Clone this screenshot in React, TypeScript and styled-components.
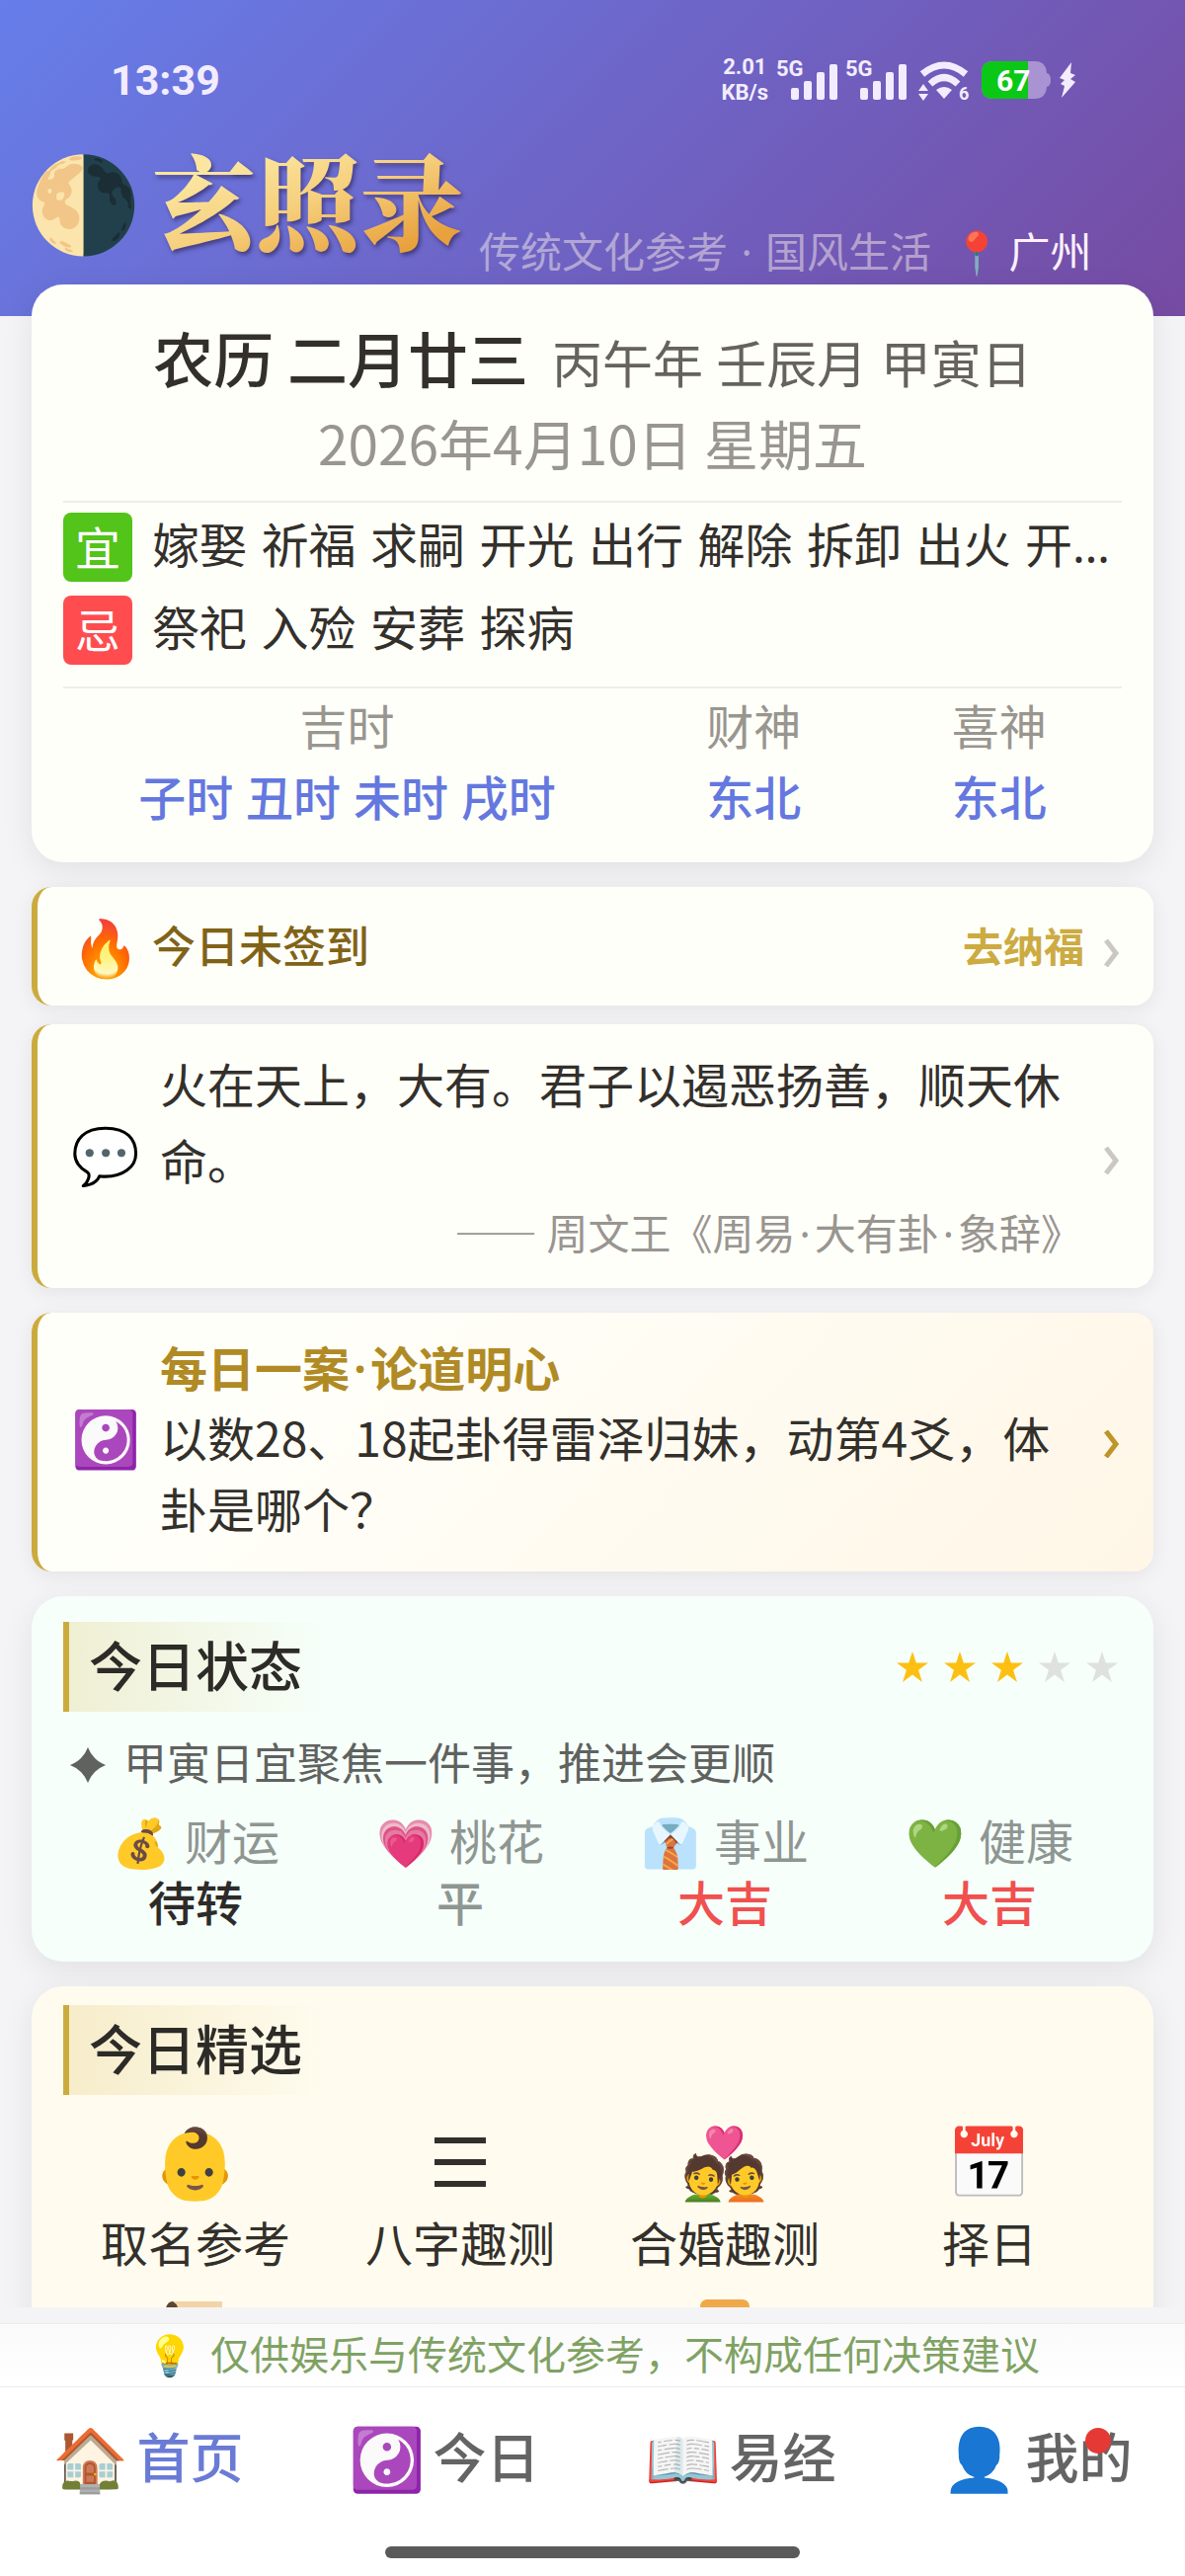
import React from 'react';
import styled, { createGlobalStyle } from 'styled-components';

const GlobalStyle = createGlobalStyle`
  * {
    box-sizing: border-box;
  }

  body {
    margin: 0;
    background: #f4f4f6;
    color: #33302b;
    font-family: 'Noto Sans CJK SC', 'Noto Color Emoji', sans-serif;
  }

  h1, h2, p, ul, dl, dt, dd {
    margin: 0;
    padding: 0;
    font-weight: 400;
  }

  ul {
    list-style: none;
  }

  button {
    border: 0;
    padding: 0;
    background: none;
    color: inherit;
    font: inherit;
    text-align: left;
    cursor: pointer;
  }

  a {
    color: inherit;
    text-decoration: none;
  }
`;

const Page = styled.div`
  display: flex;
  flex-direction: column;
  height: 100vh;
`;

const Main = styled.main`
  flex: 1;
  min-height: 0;
  overflow: hidden;
  margin-bottom: 16px;
`;

/* header */

const Header = styled.header`
  height: 320px;
  padding: 50px 26px 0;
  background: linear-gradient(135deg, #667eea 0%, #764ba2 100%);
`;

const StatusBar = styled.div`
  display: flex;
  align-items: center;
  justify-content: space-between;
  height: 62px;
  padding: 0 84px 0 86px;
  color: #f3ecff;
  font-family: Roboto, sans-serif;
`;

const Clock = styled.time`
  font-size: 43px;
  font-weight: 700;
`;

const StatusIcons = styled.div`
  display: flex;
  align-items: center;
  gap: 8px;
`;

const NetSpeed = styled.div`
  font-size: 22px;
  line-height: 26px;
  font-weight: 700;
  text-align: center;
`;

const BrandRow = styled.div`
  display: flex;
  align-items: flex-start;
  height: 158px;
`;

const Moon = styled.span`
  flex: none;
  width: 128px;
  font-size: 94px;
  line-height: 110px;
  padding-top: 32px;
`;

const BrandName = styled.h1`
  flex: none;
  padding-top: 18px;
  margin-right: 16px;
  font-family: 'Noto Serif CJK SC', 'Noto Sans CJK SC', serif;
  font-size: 105px;
  line-height: 140px;
  font-weight: 900;
  background: linear-gradient(160deg, #fbe6a0 30%, #f6cf7c 55%, #e8a13c 85%);
  background-clip: text;
  -webkit-background-clip: text;
  color: transparent;
  filter: drop-shadow(2px 3px 2px rgba(40, 30, 80, 0.6));
`;

const Tagline = styled.p`
  padding-top: 113px;
  color: rgba(255, 245, 235, 0.48);
  font-size: 42px;
  line-height: 56px;
  white-space: nowrap;
`;

const City = styled.button`
  display: flex;
  gap: 6px;
  padding-top: 113px;
  margin-left: 20px;
  color: #fdf0fb;
  font-size: 42px;
  line-height: 56px;
  white-space: nowrap;
`;

/* cards */

const Cards = styled.div`
  position: relative;
  display: flex;
  flex-direction: column;
  gap: 25px;
  margin-top: -32px;
  padding: 0 32px;
`;

const CardGroup = styled.div`
  display: flex;
  flex-direction: column;
  gap: 19px;
`;

const Card = styled.section<{ $bg?: string; $pad: string }>`
  padding: ${(p) => p.$pad};
  border-radius: 32px;
  background: ${(p) => p.$bg || '#fffffa'};
  box-shadow: 0 8px 32px rgba(0, 0, 0, 0.08);
`;

const LunarDate = styled.h2`
  display: flex;
  align-items: baseline;
  justify-content: center;
  gap: 24px;
  height: 88px;
  font-size: 61px;
  line-height: 88px;
  font-weight: 500;
`;

const GanZhi = styled.span`
  color: #66625c;
  font-size: 51px;
  font-weight: 400;
`;

const SolarDate = styled.p`
  margin-bottom: 19px;
  color: #999590;
  font-size: 55px;
  line-height: 82px;
  text-align: center;
`;

const Section = styled.div<{ $pad: string }>`
  border-top: 2px solid #efece9;
  padding: ${(p) => p.$pad};
`;

const AdviceRow = styled.div`
  display: flex;
  align-items: center;
  gap: 20px;
  height: 70px;

  & + & {
    margin-top: 14px;
  }
`;

const AdviceBadge = styled.span<{ $color: string }>`
  flex: none;
  width: 70px;
  height: 70px;
  border-radius: 8px;
  background: ${(p) => p.$color};
  color: #fff;
  font-size: 46px;
  line-height: 66px;
  text-align: center;
`;

/* Noto Sans comes first so that the ellipsis sits on the baseline */
const AdviceText = styled.p`
  flex: 1;
  min-width: 0;
  overflow: hidden;
  padding-bottom: 4px;
  white-space: nowrap;
  text-overflow: ellipsis;
  font-family: 'Noto Sans', 'Noto Sans CJK SC', sans-serif;
  font-size: 48px;
  line-height: 70px;
`;

const Word = styled.span`
  margin-right: 2px;

  &:last-child {
    margin-right: 0;
  }
`;

const Gods = styled.dl`
  display: flex;
  justify-content: space-around;
  text-align: center;
  font-size: 48px;
  line-height: 72px;

  dt {
    color: #99958f;
  }

  dd {
    color: #6478e0;
    font-weight: 500;
  }
`;

const LinkCard = styled.button<{ $bg?: string; $pad: string }>`
  display: flex;
  align-items: center;
  width: 100%;
  padding: ${(p) => p.$pad};
  border-left: 6px solid #cbab3e;
  border-radius: 20px;
  background: ${(p) => p.$bg || '#fffffa'};
  box-shadow: 0 4px 20px rgba(0, 0, 0, 0.07);
`;

const CardEmoji = styled.span<{ $width?: number }>`
  flex: none;
  width: ${(p) => p.$width || 90}px;
  padding-bottom: 4px;
  font-size: 56px;
  line-height: 68px;
`;

const CardBody = styled.span`
  flex: 1;
  min-width: 0;
  margin-right: 20px;
`;

const CheckinText = styled.span`
  flex: 1;
  padding-bottom: 4px;
  color: #806318;
  font-size: 44px;
  line-height: 68px;
  font-weight: 500;
`;

const CheckinAction = styled.span`
  padding-bottom: 4px;
  margin-right: 18px;
  color: #ccab42;
  font-size: 41px;
  line-height: 68px;
  font-weight: 600;
`;

const QuoteText = styled.span`
  display: block;
  font-size: 48px;
  line-height: 77px;
`;

const QuoteSource = styled.cite`
  display: block;
  height: 62px;
  margin-top: 4px;
  color: #999590;
  font-size: 42px;
  line-height: 62px;
  font-style: normal;
  text-align: right;
  white-space: nowrap;
`;

const CaseTitle = styled.span`
  display: block;
  height: 70px;
  color: #b08a24;
  font-size: 48px;
  line-height: 70px;
  font-weight: 600;
`;

const CaseText = styled.span`
  display: block;
  font-size: 48px;
  line-height: 72px;
`;

const MidDot = styled.span`
  padding: 0 4px;
  font-family: 'Noto Sans', sans-serif;
`;

const ChevronIcon = styled.svg`
  flex: none;
  margin-top: 14px;
`;

const SectionHead = styled.div`
  display: flex;
  align-items: center;
  justify-content: space-between;
`;

const SectionTitle = styled.h2`
  padding: 0 28px 5px 20px;
  border-left: 6px solid #cbab3e;
  background: linear-gradient(90deg, rgba(212, 175, 55, 0.2), rgba(212, 175, 55, 0));
  color: #2d2b27;
  font-size: 54px;
  line-height: 86px;
  font-weight: 500;
`;

const Stars = styled.div`
  display: flex;
  gap: 16px;
  padding-right: 4px;
`;

const Hint = styled.p`
  display: flex;
  align-items: center;
  gap: 18px;
  margin-top: 18px;
  padding-left: 7px;
  color: #5f625f;
  font-size: 44px;
  line-height: 64px;

  svg {
    margin-top: 8px;
  }
`;

const FortuneGrid = styled.dl`
  display: grid;
  grid-template-columns: repeat(4, 1fr);
  margin-top: 16px;
  font-size: 48px;
  line-height: 62px;
  text-align: center;
`;

const FortuneLabel = styled.dt`
  display: flex;
  justify-content: center;
  gap: 14px;
  color: #8f9692;
`;

const FortuneValue = styled.dd<{ $color: string }>`
  color: ${(p) => p.$color};
  font-weight: 500;
`;

const PickGrid = styled.ul`
  display: grid;
  grid-template-columns: repeat(4, 1fr);
  row-gap: 20px;
  margin-top: 22px;
`;

const Pick = styled.a`
  display: flex;
  flex-direction: column;
  align-items: center;
  gap: 10px;
  font-size: 48px;
  line-height: 64px;
`;

const PickEmoji = styled.span`
  display: flex;
  align-items: center;
  justify-content: center;
  height: 84px;
  font-size: 70px;
  line-height: 84px;
`;

/* footer */

const Tip = styled.p`
  display: flex;
  align-items: center;
  justify-content: center;
  gap: 16px;
  height: 65px;
  padding-bottom: 5px;
  border-top: 1px solid #ececec;
  border-bottom: 1px solid #ececec;
  background: linear-gradient(#fafafa, #fff);
  color: #7fa263;
  font-size: 40px;
`;

const BottomArea = styled.div`
  padding-bottom: 18px;
  background: #fff;
`;

const Nav = styled.nav`
  display: flex;
  height: 144px;
  padding-bottom: 8px;
`;

const NavItem = styled.a<{ $active?: boolean }>`
  flex: 1;
  display: flex;
  align-items: center;
  justify-content: center;
  gap: 8px;
  color: ${(p) => (p.$active ? '#6a7bd6' : '#646464')};
  font-size: 54px;
  font-weight: 500;
`;

const NavEmoji = styled.span`
  font-size: 62px;
`;

const NavLabel = styled.span`
  position: relative;
`;

const RedDot = styled.i`
  position: absolute;
  top: 12px;
  right: 22px;
  width: 26px;
  height: 26px;
  border-radius: 50%;
  background: #e53935;
`;

const HomeBar = styled.div`
  width: 35%;
  height: 12px;
  margin: 17px auto 0;
  border-radius: 6px;
  background: #5a5a5a;
`;

const good = ['嫁娶', '祈福', '求嗣', '开光', '出行', '解除', '拆卸', '出火', '开市', '交易'];
const bad = ['祭祀', '入殓', '安葬', '探病'];
const hours = ['子时', '丑时', '未时', '戌时'];

const fortunes = [
  { icon: '💰', label: '财运', value: '待转', color: '#2d2b29' },
  { icon: '💗', label: '桃花', value: '平', color: '#8f9692' },
  { icon: '👔', label: '事业', value: '大吉', color: '#f0504f' },
  { icon: '💚', label: '健康', value: '大吉', color: '#f0504f' },
];

const navs = [
  { icon: '🏠', label: '首页', active: true },
  { icon: '☯️', label: '今日' },
  { icon: '📖', label: '易经' },
  { icon: '👤', label: '我的', dot: true },
];

const Words: React.FC<{ list: string[] }> = ({ list }) => (
  <>
    {list.map((w, i) => (
      <React.Fragment key={w}>
        {i > 0 && ' '}
        <Word>{w}</Word>
      </React.Fragment>
    ))}
  </>
);

const Chevron: React.FC<{ color?: string }> = ({ color = '#cbc8c4' }) => (
  <ChevronIcon width="18" height="28" viewBox="0 0 18 28" fill="none" aria-hidden="true">
    <path d="M4 1 L14 14 L4 27" stroke={color} strokeWidth="5" />
  </ChevronIcon>
);

const Signal = () => (
  <svg width="62" height="52" viewBox="0 0 62 52" fill="currentColor" aria-hidden="true">
    <text x="0" y="22" fontSize="22" fontWeight="700" fontFamily="Roboto, sans-serif">5G</text>
    <rect x="15" y="34" width="8" height="12" rx="2" />
    <rect x="28" y="27" width="8" height="19" rx="2" />
    <rect x="41" y="18" width="8" height="28" rx="2" />
    <rect x="54" y="10" width="8" height="36" rx="2" />
  </svg>
);

const Wifi = () => (
  <svg width="60" height="52" viewBox="-4 -4 60 52" fill="currentColor" aria-hidden="true">
    <path d="M4 16 Q26 -2 48 16" fill="none" stroke="currentColor" strokeWidth="7" />
    <path d="M12 26 Q26 13 40 26" fill="none" stroke="currentColor" strokeWidth="7" />
    <path d="M18 32 Q26 26 34 32 L26 41 Z" />
    <path d="M0 33 L5 26 L10 33 Z M0 36 L10 36 L5 43 Z" />
    <text x="41" y="42" fontSize="18" fontWeight="700" fontFamily="Roboto, sans-serif">6</text>
  </svg>
);

const Battery = () => (
  <svg width="70" height="38" viewBox="0 0 70 38" aria-hidden="true">
    <path d="M12 0 H54 Q65 0 66 12 Q70 13 70 19 Q70 25 66 26 Q65 38 54 38 H12 Q0 38 0 26 V12 Q0 0 12 0 Z" fill="#a993d2" />
    <path d="M12 0 H47 V38 H12 Q0 38 0 26 V12 Q0 0 12 0 Z" fill="#0bc816" />
    <text x="15" y="30" fontSize="30" fontWeight="700" fill="#fff" fontFamily="Roboto, sans-serif">67</text>
  </svg>
);

const Bolt = () => (
  <svg width="18" height="36" viewBox="0 0 18 36" fill="currentColor" aria-hidden="true">
    <path d="M13 0 L1 16 L6 18 L2 22 L6 24 L3 36 L17 20 L12 17 L17 13 L12 11 Z" />
  </svg>
);

const Star: React.FC<{ on: boolean }> = ({ on }) => (
  <svg width="32" height="32" viewBox="0 0 32 32" fill={on ? '#fdc012' : '#dfe1e0'} aria-hidden="true">
    <path d="M16 0 L19.8 11.6 L32 11.6 L22.1 18.8 L25.9 31 L16 23.6 L6.1 31 L9.9 18.8 L0 11.6 L12.2 11.6 Z" />
  </svg>
);

const Sparkle = () => (
  <svg width="36" height="36" viewBox="0 0 36 36" fill="#5f625f" aria-hidden="true">
    <path d="M18 0 Q23 13 36 18 Q23 23 18 36 Q13 23 0 18 Q13 13 18 0 Z" />
  </svg>
);

const Trigram = () => (
  <svg width="52" height="58" viewBox="0 -8 52 58" fill="#33302b" aria-hidden="true">
    <path d="M0 0 H52 V6 H0 Z M0 22 H52 V28 H0 Z M0 44 H52 V50 H0 Z" />
  </svg>
);

const Scroll = () => (
  <svg width="62" height="66" viewBox="0 0 62 66" aria-hidden="true">
    <path d="M8 0 H58 V50 Q58 66 46 66 H14 V16 H0 Q0 0 8 0 Z" fill="#f3d3a8" />
    <path d="M8 0 Q15 4 14 16 H0 Q0 0 8 0 Z" fill="#5a4632" />
  </svg>
);

const Plaque = () => (
  <svg width="50" height="70" viewBox="0 0 50 70" aria-hidden="true">
    <rect width="50" height="70" rx="7" fill="#efa94a" />
  </svg>
);

const App: React.FC = () => {
  return (
    <Page lang="zh-CN">
      <GlobalStyle />
      <Main>
        <Header>
          <StatusBar>
            <Clock>13:39</Clock>
            <StatusIcons>
              <NetSpeed>
                2.01
                <br />
                KB/s
              </NetSpeed>
              <Signal />
              <Signal />
              <Wifi />
              <Battery />
              <Bolt />
            </StatusIcons>
          </StatusBar>
          <BrandRow>
            <Moon>🌗</Moon>
            <BrandName>玄照录</BrandName>
            <Tagline>
              传统文化参考 <MidDot>·</MidDot> 国风生活
            </Tagline>
            <City type="button">
              <span>📍</span>广州
            </City>
          </BrandRow>
        </Header>

        <Cards>
          <Card $pad="30px 32px 32px">
            <LunarDate>
              农历 二月廿三
              <GanZhi>
                <Words list={['丙午年', '壬辰月', '甲寅日']} />
              </GanZhi>
            </LunarDate>
            <SolarDate>2026年4月10日 星期五</SolarDate>
            <Section $pad="10px 0 22px">
              <AdviceRow>
                <AdviceBadge $color="#52c41a">宜</AdviceBadge>
                <AdviceText>
                  <Words list={good} />
                </AdviceText>
              </AdviceRow>
              <AdviceRow>
                <AdviceBadge $color="#ff4d4f">忌</AdviceBadge>
                <AdviceText>
                  <Words list={bad} />
                </AdviceText>
              </AdviceRow>
            </Section>
            <Section $pad="0">
              <Gods>
                <div>
                  <dt>吉时</dt>
                  <dd>
                    <Words list={hours} />
                  </dd>
                </div>
                <div>
                  <dt>财神</dt>
                  <dd>东北</dd>
                </div>
                <div>
                  <dt>喜神</dt>
                  <dd>东北</dd>
                </div>
              </Gods>
            </Section>
          </Card>

          <CardGroup>
            <LinkCard type="button" $pad="24px 34px">
              <CardEmoji $width={82}>🔥</CardEmoji>
              <CheckinText>今日未签到</CheckinText>
              <CheckinAction>去纳福</CheckinAction>
              <Chevron />
            </LinkCard>
            <LinkCard type="button" $pad="21px 34px 26px">
              <CardEmoji>💬</CardEmoji>
              <CardBody>
                <QuoteText>火在天上，大有。君子以遏恶扬善，顺天休命。</QuoteText>
                <QuoteSource>
                  —— 周文王《周易<MidDot>·</MidDot>大有卦<MidDot>·</MidDot>象辞》
                </QuoteSource>
              </CardBody>
              <Chevron />
            </LinkCard>
          </CardGroup>

          <LinkCard type="button" $pad="19px 34px 29px" $bg="linear-gradient(135deg, #fffffa 20%, #fff6e6)">
            <CardEmoji>☯️</CardEmoji>
            <CardBody>
              <CaseTitle>
                每日一案<MidDot>·</MidDot>论道明心
              </CaseTitle>
              <CaseText>以数28、18起卦得雷泽归妹，动第4爻，体卦是哪个？</CaseText>
            </CardBody>
            <Chevron color="#bd9528" />
          </LinkCard>

          <Card $pad="26px 32px 31px" $bg="#f6fffa">
            <SectionHead>
              <SectionTitle>今日状态</SectionTitle>
              <Stars role="img" aria-label="3 / 5">
                {[1, 2, 3, 4, 5].map((n) => (
                  <Star key={n} on={n <= 3} />
                ))}
              </Stars>
            </SectionHead>
            <Hint>
              <Sparkle />
              甲寅日宜聚焦一件事，推进会更顺
            </Hint>
            <FortuneGrid>
              {fortunes.map((f) => (
                <div key={f.label}>
                  <FortuneLabel>
                    <span>{f.icon}</span>
                    {f.label}
                  </FortuneLabel>
                  <FortuneValue $color={f.color}>{f.value}</FortuneValue>
                </div>
              ))}
            </FortuneGrid>
          </Card>

          <Card $pad="19px 32px 28px" $bg="#fffcef">
            <SectionHead>
              <SectionTitle>今日精选</SectionTitle>
            </SectionHead>
            <PickGrid>
              <li>
                <Pick href="#name">
                  <PickEmoji>👶</PickEmoji>
                  取名参考
                </Pick>
              </li>
              <li>
                <Pick href="#bazi">
                  <PickEmoji>
                    <Trigram />
                  </PickEmoji>
                  八字趣测
                </Pick>
              </li>
              <li>
                <Pick href="#marriage">
                  <PickEmoji>💑</PickEmoji>
                  合婚趣测
                </Pick>
              </li>
              <li>
                <Pick href="#date">
                  <PickEmoji>📅</PickEmoji>
                  择日
                </Pick>
              </li>
              <li>
                <Pick href="#scroll">
                  <PickEmoji>
                    <Scroll />
                  </PickEmoji>
                </Pick>
              </li>
              <li />
              <li>
                <Pick href="#plaque">
                  <PickEmoji>
                    <Plaque />
                  </PickEmoji>
                </Pick>
              </li>
            </PickGrid>
          </Card>
        </Cards>
      </Main>

      <Tip>
        <span>💡</span>
        仅供娱乐与传统文化参考，不构成任何决策建议
      </Tip>
      <BottomArea>
        <Nav>
          {navs.map((n) => (
            <NavItem key={n.label} href={`#${n.label}`} $active={n.active}>
              <NavEmoji>{n.icon}</NavEmoji>
              <NavLabel>
                {n.label}
                {n.dot && <RedDot />}
              </NavLabel>
            </NavItem>
          ))}
        </Nav>
        <HomeBar />
      </BottomArea>
    </Page>
  );
};

export default App;
